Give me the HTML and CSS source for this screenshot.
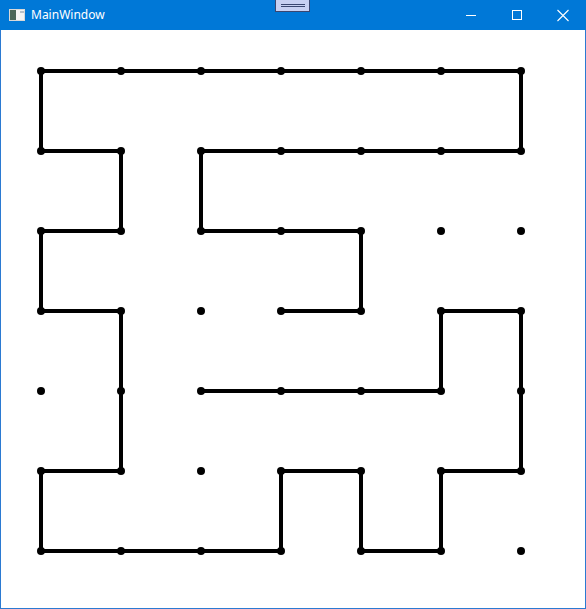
FILE: index.html
```html
<!DOCTYPE html>
<html>
<head>
<meta charset="utf-8">
<link rel="stylesheet" href="styles.css">
</head>
<body>
<div class="window">
  <div class="titlebar">
    <svg class="app-icon" width="16" height="16" viewBox="0 0 16 16">
      <rect x="0.5" y="2.5" width="15" height="11" fill="#f4f4f4" stroke="#d8d8d8"/>
      <rect x="1" y="3" width="6" height="10" fill="#4a6658"/>
      <rect x="11" y="4" width="4" height="2" fill="#b8c0c8"/>
    </svg>
    <span class="title">MainWindow</span>
    <div class="controls">
      <svg width="46" height="30" viewBox="0 0 46 30"><line x1="18" y1="15.5" x2="28" y2="15.5" stroke="#fff" stroke-width="1"/></svg>
      <svg width="46" height="30" viewBox="0 0 46 30"><rect x="18.5" y="10.5" width="9" height="9" fill="none" stroke="#fff" stroke-width="1"/></svg>
      <svg width="46" height="30" viewBox="0 0 46 30"><path d="M17.5 10 L28.5 21 M28.5 10 L17.5 21" stroke="#fff" stroke-width="1.1"/></svg>
    </div>
    <div class="dbg-btn"><span></span><span></span></div>
  </div>
  <div class="content">
    <svg class="maze" width="584" height="578" viewBox="1 30 584 578">
      <g stroke="#000" stroke-width="4" fill="none" stroke-linecap="square" stroke-linejoin="miter">
        <polyline points="41,151 41,71 521,71 521,151"/>
        <polyline points="41,151 121,151 121,231 41,231 41,311 121,311 121,471 41,471 41,551 281,551 281,471 361,471 361,551 441,551 441,471 521,471 521,311 441,311 441,391 201,391"/>
        <polyline points="201,151 521,151"/>
        <polyline points="201,151 201,231 361,231 361,311 281,311"/>
      </g>
      <g fill="#000">
        <circle cx="41" cy="71" r="4"/><circle cx="121" cy="71" r="4"/><circle cx="201" cy="71" r="4"/><circle cx="281" cy="71" r="4"/><circle cx="361" cy="71" r="4"/><circle cx="441" cy="71" r="4"/><circle cx="521" cy="71" r="4"/>
        <circle cx="41" cy="151" r="4"/><circle cx="121" cy="151" r="4"/><circle cx="201" cy="151" r="4"/><circle cx="281" cy="151" r="4"/><circle cx="361" cy="151" r="4"/><circle cx="441" cy="151" r="4"/><circle cx="521" cy="151" r="4"/>
        <circle cx="41" cy="231" r="4"/><circle cx="121" cy="231" r="4"/><circle cx="201" cy="231" r="4"/><circle cx="281" cy="231" r="4"/><circle cx="361" cy="231" r="4"/><circle cx="441" cy="231" r="4"/><circle cx="521" cy="231" r="4"/>
        <circle cx="41" cy="311" r="4"/><circle cx="121" cy="311" r="4"/><circle cx="201" cy="311" r="4"/><circle cx="281" cy="311" r="4"/><circle cx="361" cy="311" r="4"/><circle cx="441" cy="311" r="4"/><circle cx="521" cy="311" r="4"/>
        <circle cx="41" cy="391" r="4"/><circle cx="121" cy="391" r="4"/><circle cx="201" cy="391" r="4"/><circle cx="281" cy="391" r="4"/><circle cx="361" cy="391" r="4"/><circle cx="441" cy="391" r="4"/><circle cx="521" cy="391" r="4"/>
        <circle cx="41" cy="471" r="4"/><circle cx="121" cy="471" r="4"/><circle cx="201" cy="471" r="4"/><circle cx="281" cy="471" r="4"/><circle cx="361" cy="471" r="4"/><circle cx="441" cy="471" r="4"/><circle cx="521" cy="471" r="4"/>
        <circle cx="41" cy="551" r="4"/><circle cx="121" cy="551" r="4"/><circle cx="201" cy="551" r="4"/><circle cx="281" cy="551" r="4"/><circle cx="361" cy="551" r="4"/><circle cx="441" cy="551" r="4"/><circle cx="521" cy="551" r="4"/>
      </g>
    </svg>
  </div>
</div>
</body>
</html>
```
FILE: styles.css
```css
html, body {
  margin: 0;
  padding: 0;
  background: #ffffff;
  overflow: hidden;
}
.window {
  width: 586px;
  height: 609px;
  box-sizing: border-box;
  display: flex;
  flex-direction: column;
  border: 1px solid #2b7ad2;
  border-top: none;
}
.titlebar {
  position: relative;
  height: 30px;
  flex: 0 0 30px;
  margin: 0 -1px;
  background: #0078d7;
  display: flex;
  align-items: center;
  padding-left: 9px;
}
.app-icon {
  display: block;
  margin-top: -1px;
}
.title {
  margin-left: 6px;
  color: #ffffff;
  font-family: "Noto Sans", "Open Sans", sans-serif;
  font-size: 12px;
  line-height: 16px;
}
.controls {
  margin-left: auto;
  display: flex;
  height: 30px;
}
.controls svg {
  display: block;
}
.dbg-btn {
  position: absolute;
  left: 275px;
  top: -1px;
  width: 33px;
  height: 11px;
  background: #c8d0f2;
  border: 1px solid #3a4670;
  display: flex;
  flex-direction: column;
  align-items: center;
  justify-content: center;
  gap: 1px;
}
.dbg-btn span {
  display: block;
  width: 24px;
  height: 1px;
  background: #3a4670;
}
.content {
  flex: 1;
  background: #ffffff;
}
.maze {
  display: block;
}
```
